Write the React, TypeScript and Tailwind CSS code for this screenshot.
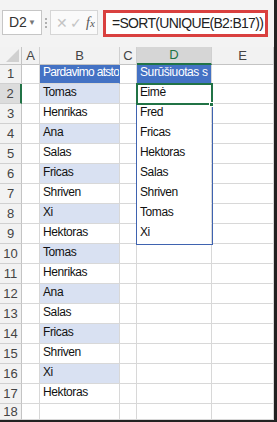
import React from "react";

const sales = [
  "Tomas", "Henrikas", "Ana", "Salas", "Fricas", "Shriven", "Xi", "Hektoras",
  "Tomas", "Henrikas", "Ana", "Salas", "Fricas", "Shriven", "Xi", "Hektoras",
];

const sorted = ["Eimė", "Fred", "Fricas", "Hektoras", "Salas", "Shriven", "Tomas", "Xi"];

const cols = ["A", "B", "C", "D", "E"];

function RowHead({ n, active }: { n: number; active?: boolean }) {
  return (
    <div
      className={
        "flex items-center justify-center border-b border-[#d0d0d0] text-[13px] tracking-normal text-[#444] " +
        (active ? "bg-[#dcdcdc] border-r-2 border-r-[#217346]" : "bg-[#f2f2f2] border-r border-r-[#c4c4c4]")
      }
    >
      {n}
    </div>
  );
}

function Cell({ children, className = "" }: { children?: React.ReactNode; className?: string }) {
  return (
    <div className={"flex items-end overflow-hidden whitespace-nowrap pb-[2px] pl-[3px] border-r border-b border-[#d8d8d8] " + className}>
      {children}
    </div>
  );
}

export default function App() {
  return (
    <div className="w-[277px] h-[422px] overflow-hidden bg-[#f3f3f3] border-r-[3px] border-b-2 border-[#222] font-['Liberation_Sans',Arial,sans-serif]">
      {/* formula bar */}
      <div className="flex h-[47px] items-start pt-[10px] pl-[2px]">
        <div className="flex h-[25px] w-[40px] shrink-0 items-center justify-between border border-[#c6c6c6] bg-white pl-[6px] pr-[5px] text-[14px] text-[#333]">
          <span>D2</span>
          <span className="text-[8px] text-[#777]">▼</span>
        </div>
        <div className="flex h-[25px] w-[8px] shrink-0 flex-col items-center justify-center gap-[2px]">
          <span className="h-[2px] w-[2px] bg-[#b0b0b0]" />
          <span className="h-[2px] w-[2px] bg-[#b0b0b0]" />
          <span className="h-[2px] w-[2px] bg-[#b0b0b0]" />
        </div>
        <div className="flex h-[25px] w-[48px] shrink-0 items-center gap-[2px] border border-[#d6d6d6] bg-[#fafafa] pl-[5px]">
          <span className="text-[14px] leading-none text-[#c4c4c4]">✕</span>
          <span className="text-[14px] leading-none text-[#c4c4c4]">✓</span>
          <span className="ml-[2px] font-['Liberation_Serif',serif] text-[14px] italic text-[#555]">
            f<span className="text-[11px]">x</span>
          </span>
        </div>
        <div className="ml-[5px] flex h-[27px] w-[165px] shrink-0 items-center overflow-hidden border-[3px] border-[#d9403f] bg-white pl-[6px] text-[14px] tracking-[-0.7px] text-[#222]">
          =SORT(UNIQUE(B2:B17))
        </div>
      </div>

      {/* sheet */}
      <div className="relative grid grid-cols-[22px_18px_80px_17px_75px_62px] grid-rows-[18px_19px_repeat(16,20px)_16px] bg-white text-[12px] tracking-[-0.4px] text-[#111]">
        {/* column headers */}
        <div className="relative border-r border-b border-[#c4c4c4] bg-[#f2f2f2]">
          <svg className="absolute bottom-[2px] right-[2px]" width="13" height="13" viewBox="0 0 13 13">
            <polygon points="13,0 13,13 0,13" fill="#d0d0d0" />
          </svg>
        </div>
        {cols.map((c) => (
          <div
            key={c}
            className={
              "flex items-center justify-center border-r border-[#d0d0d0] text-[13px] tracking-normal " +
              (c === "D"
                ? "bg-[#d6d6d6] border-b-2 border-b-[#217346] text-[#217346]"
                : "bg-[#f2f2f2] border-b border-b-[#c4c4c4] text-[#444]")
            }
          >
            {c}
          </div>
        ))}

        {/* row 1 */}
        <RowHead n={1} />
        <Cell />
        <Cell className="bg-[#4472c4] pl-[2px] text-white tracking-[-0.7px] border-r-[#4472c4]">Pardavimo atstov</Cell>
        <Cell />
        <Cell className="bg-[#4472c4] text-white border-b-[#4472c4]">Surūšiuotas s</Cell>
        <Cell />

        {sales.map((name, i) => {
          const row = i + 2;
          const inSpill = row <= 9;
          return (
            <React.Fragment key={row}>
              <RowHead n={row} active={row === 2} />
              <Cell />
              <Cell className={row % 2 === 0 ? "bg-[#d9e1f2]" : ""}>{name}</Cell>
              <Cell />
              <Cell className={inSpill ? "border-b-transparent" : ""}>{inSpill ? sorted[row - 2] : null}</Cell>
              <Cell />
            </React.Fragment>
          );
        })}

        {/* row 18 */}
        <RowHead n={18} />
        <Cell />
        <Cell />
        <Cell />
        <Cell />
        <Cell />

        {/* spill range outline */}
        <div className="pointer-events-none absolute left-[136px] top-[36px] h-[162px] w-[77px] border border-[#3f63b0]" />
        {/* active cell */}
        <div className="pointer-events-none absolute left-[136px] top-[36px] h-[22px] w-[77px] border-2 border-[#217346]" />
        <div className="pointer-events-none absolute left-[209px] top-[55px] h-[5px] w-[5px] border border-white bg-[#217346]" />
      </div>
    </div>
  );
}
